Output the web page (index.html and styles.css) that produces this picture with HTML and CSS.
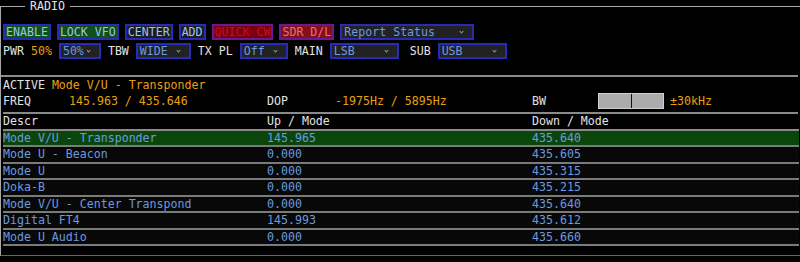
FILE: index.html
```html
<!DOCTYPE html>
<html lang="en">
<head>
  <meta charset="UTF-8" />
  <title>Radio</title>
  <link rel="stylesheet" href="styles.css">
</head>
<body>

  <fieldset class="radio">
    <legend>RADIO</legend>

    <!-- buttons -->
    <div class="row first">
      <button class="btn on">ENABLE</button>
      <button class="btn on">LOCK VFO</button>
      <button class="btn">CENTER</button>
      <button class="btn">ADD</button>
      <button class="btn warn">QUICK CW</button>
      <button class="btn alert">SDR D/L</button>
      <span class="sel w-report">Report Status</span>
    </div>

    <!-- settings -->
    <div class="row second">
      <span class="lbl">PWR</span>
      <span class="val">50%</span>
      <span class="sel w-pwr">50%</span>
      <span class="lbl">TBW</span>
      <span class="sel w-tbw">WIDE</span>
      <span class="lbl">TX PL</span>
      <span class="sel w-pl">Off</span>
      <span class="lbl">MAIN</span>
      <span class="sel w-mode">LSB</span>
      <span class="lbl sub">SUB</span>
      <span class="sel w-mode">USB</span>
    </div>

    <div class="sep"></div>

    <div class="active">ACTIVE <span class="val">Mode V/U - Transponder</span></div>
    <div class="status">
      <div class="cell"><span class="key">FREQ</span><span class="val">145.963 / 435.646</span></div>
      <div class="cell"><span class="key">DOP</span><span class="val">-1975Hz / 5895Hz</span></div>
      <div class="cell"><span class="key">BW</span><span class="bw"><i></i></span><span class="val">±30kHz</span></div>
    </div>

    <table class="list">
      <thead>
        <tr><th>Descr</th><th>Up / Mode</th><th>Down / Mode</th></tr>
      </thead>
      <tbody>
        <tr class="current"><td>Mode V/U - Transponder</td><td>145.965</td><td>435.640</td></tr>
        <tr><td>Mode U - Beacon</td><td>0.000</td><td>435.605</td></tr>
        <tr><td>Mode U</td><td>0.000</td><td>435.315</td></tr>
        <tr><td>Doka-B</td><td>0.000</td><td>435.215</td></tr>
        <tr><td>Mode V/U - Center Transpond</td><td>0.000</td><td>435.640</td></tr>
        <tr><td>Digital FT4</td><td>145.993</td><td>435.612</td></tr>
        <tr><td>Mode U Audio</td><td>0.000</td><td>435.660</td></tr>
      </tbody>
    </table>
  </fieldset>

</body>
</html>
```

FILE: styles.css
```css
body {
  margin: 0;
  background: #000;
  color: #e2e2e2;
  font-family: "DejaVu Sans Mono", monospace;
  font-size: 11.6px;
  height: 262px;
  overflow: hidden;
}
.radio {
  margin: 0;
  padding: 0 1px 0 2px;
  width: 794px;
  height: 254px;
  border: 1px solid #a8a8a8;
  border-bottom-color: #666;
  box-sizing: content-box;
}
.radio legend {
  margin-left: 22px;
  padding: 0 5px;
  line-height: 12px;
  color: #e2e2e2;
}
.row {
  display: flex;
  align-items: center;
  gap: 6px;
  height: 16px;
}
.row.first {
  margin-top: 12px;
}
.row.second {
  gap: 7px;
  margin-top: 3px;
}
.btn {
  font: inherit;
  height: 16px;
  padding: 0 1px;
  border: 2px solid #2a2ab8;
  background: #1c1c24;
  color: #9cc4e4;
  line-height: 12px;
}
.btn.on {
  background: #0d5218;
}
.btn.warn {
  background: #7a0010;
  border-color: #6c1890;
  color: #c01020;
}
.btn.alert {
  background: #84101c;
  border-color: #6c1890;
  color: #e07080;
}
.sel {
  position: relative;
  display: inline-block;
  box-sizing: border-box;
  height: 16px;
  padding: 0 2px;
  border: 2px solid #2a2ab8;
  background: #222;
  color: #6a9ae0;
  line-height: 12px;
}
.sel::after {
  content: "";
  position: absolute;
  right: 9px;
  top: 4px;
  width: 2px;
  height: 2px;
  border-right: 1px solid #999;
  border-bottom: 1px solid #999;
  transform: rotate(45deg);
}
.w-report { width: 134px; }
.w-pwr { width: 42px; }
.w-tbw { width: 55px; }
.w-pl { width: 48px; }
.w-mode { width: 69px; }
.lbl.sub { margin-left: 4px; }
.val {
  color: #e8a010;
}
.sep {
  margin: 16px 0 0 -2px;
  width: 797px;
  height: 2px;
  background: #8a8a8a;
}
.active {
  height: 15px;
  margin-top: 1px;
  line-height: 15px;
}
.status {
  display: grid;
  grid-template-columns: 264px 265px 1fr;
  height: 19px;
  line-height: 16px;
  border-bottom: 2px solid #8a8a8a;
  margin-right: 1px;
}
.key {
  display: inline-block;
  width: 66px;
}
.cell:nth-child(2) .key {
  width: 68px;
}
.bw {
  display: inline-block;
  position: relative;
  width: 64px;
  height: 14px;
  margin: 0 6px 0 0;
  vertical-align: top;
  background: #acacac;
  border: 1px solid #d0d0d0;
}
.bw i {
  position: absolute;
  left: 32px;
  top: 0;
  width: 1px;
  height: 14px;
  background: #111;
}
.list {
  width: 796px;
  border-collapse: collapse;
  table-layout: fixed;
}
.list th,
.list td {
  padding: 0;
  text-align: left;
  font-weight: normal;
  line-height: 14.5px;
  border-bottom: 2px solid #7a7a7a;
  white-space: nowrap;
}
.list th:nth-child(1) { width: 264px; }
.list th:nth-child(2) { width: 265px; }
.list th {
  color: #e2e2e2;
  border-bottom-color: #8a8a8a;
}
.list td {
  color: #6a9ae0;
  background: #080808;
}
.list tr.current td {
  background: #0a460c;
}
```
